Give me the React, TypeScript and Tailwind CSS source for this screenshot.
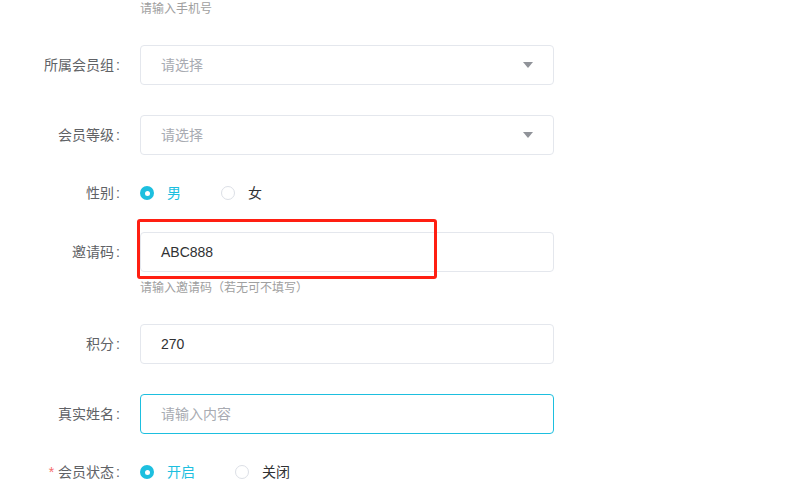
import React from "react";

const FONT = { fontFamily: '"Liberation Sans", "Noto Sans CJK SC", sans-serif' };

function Label({ text, required }: { text: string; required?: boolean }) {
  return (
    <div className="w-[140px] shrink-0 pr-[20px] text-right text-[14px] text-[#606266] leading-[20px]">
      {required && <span className="text-[#f56c6c] mr-[4px]">*</span>}
      {text}
      <span className="ml-[2px]">:</span>
    </div>
  );
}

function Select() {
  return (
    <div className="w-[414px] h-[40px] rounded-[4px] border border-[#e4e7ed] flex items-center justify-between pl-[20px] pr-[20px] text-[14px] text-[#a8abb2]">
      <span>请选择</span>
      <svg width="10" height="6" viewBox="0 0 10 6">
        <path d="M0 0 L10 0 L5 6 Z" fill="#909399" />
      </svg>
    </div>
  );
}

function Radio({ checked, label }: { checked?: boolean; label: string }) {
  return (
    <div className="flex items-center">
      {checked ? (
        <span className="w-[14px] h-[14px] rounded-full bg-[#1dbfdf] flex items-center justify-center">
          <span className="w-[5px] h-[5px] rounded-full bg-white" />
        </span>
      ) : (
        <span className="w-[14px] h-[14px] rounded-full border border-[#dcdfe6] bg-white" />
      )}
      <span className={`ml-[13px] text-[14px] leading-[20px] ${checked ? "text-[#1dbfdf]" : "text-[#303133]"}`}>
        {label}
      </span>
    </div>
  );
}

export default function App() {
  return (
    <div className="w-[793px] h-[500px] bg-white overflow-hidden relative" style={FONT}>
      <div className="pl-[140px] text-[12px] text-[#a0a0a0] leading-[16px] mt-[1px]">请输入手机号</div>

      <div className="flex items-center mt-[28px]">
        <Label text="所属会员组" />
        <Select />
      </div>

      <div className="flex items-center mt-[30px]">
        <Label text="会员等级" />
        <Select />
      </div>

      <div className="flex items-center mt-[28px] h-[20px]">
        <Label text="性别" />
        <div className="flex items-center gap-[40px]">
          <Radio checked label="男" />
          <Radio label="女" />
        </div>
      </div>

      <div className="flex items-center mt-[29px]">
        <Label text="邀请码" />
        <div className="relative">
          <div className="w-[414px] h-[40px] rounded-[4px] border border-[#e4e7ed] flex items-center pl-[20px] text-[14px] text-[#303133]">
            ABC888
          </div>
          <div className="absolute left-[-3px] top-[-13px] w-[300px] h-[60px] rounded-[3px] border-[3px] border-[#ff1f12]" />
        </div>
      </div>
      <div className="pl-[140px] text-[12px] text-[#a0a0a0] leading-[16px] mt-[8px]">请输入邀请码（若无可不填写）</div>

      <div className="flex items-center mt-[28px]">
        <Label text="积分" />
        <div className="w-[414px] h-[40px] rounded-[4px] border border-[#e4e7ed] flex items-center pl-[20px] text-[14px] text-[#303133]">
          270
        </div>
      </div>

      <div className="flex items-center mt-[30px]">
        <Label text="真实姓名" />
        <div className="w-[414px] h-[40px] rounded-[4px] border border-[#1dbfdf] flex items-center pl-[20px] text-[14px] text-[#a8abb2]">
          请输入内容
        </div>
      </div>

      <div className="flex items-center mt-[28px] h-[20px]">
        <Label text="会员状态" required />
        <div className="flex items-center gap-[40px]">
          <Radio checked label="开启" />
          <Radio label="关闭" />
        </div>
      </div>
    </div>
  );
}
